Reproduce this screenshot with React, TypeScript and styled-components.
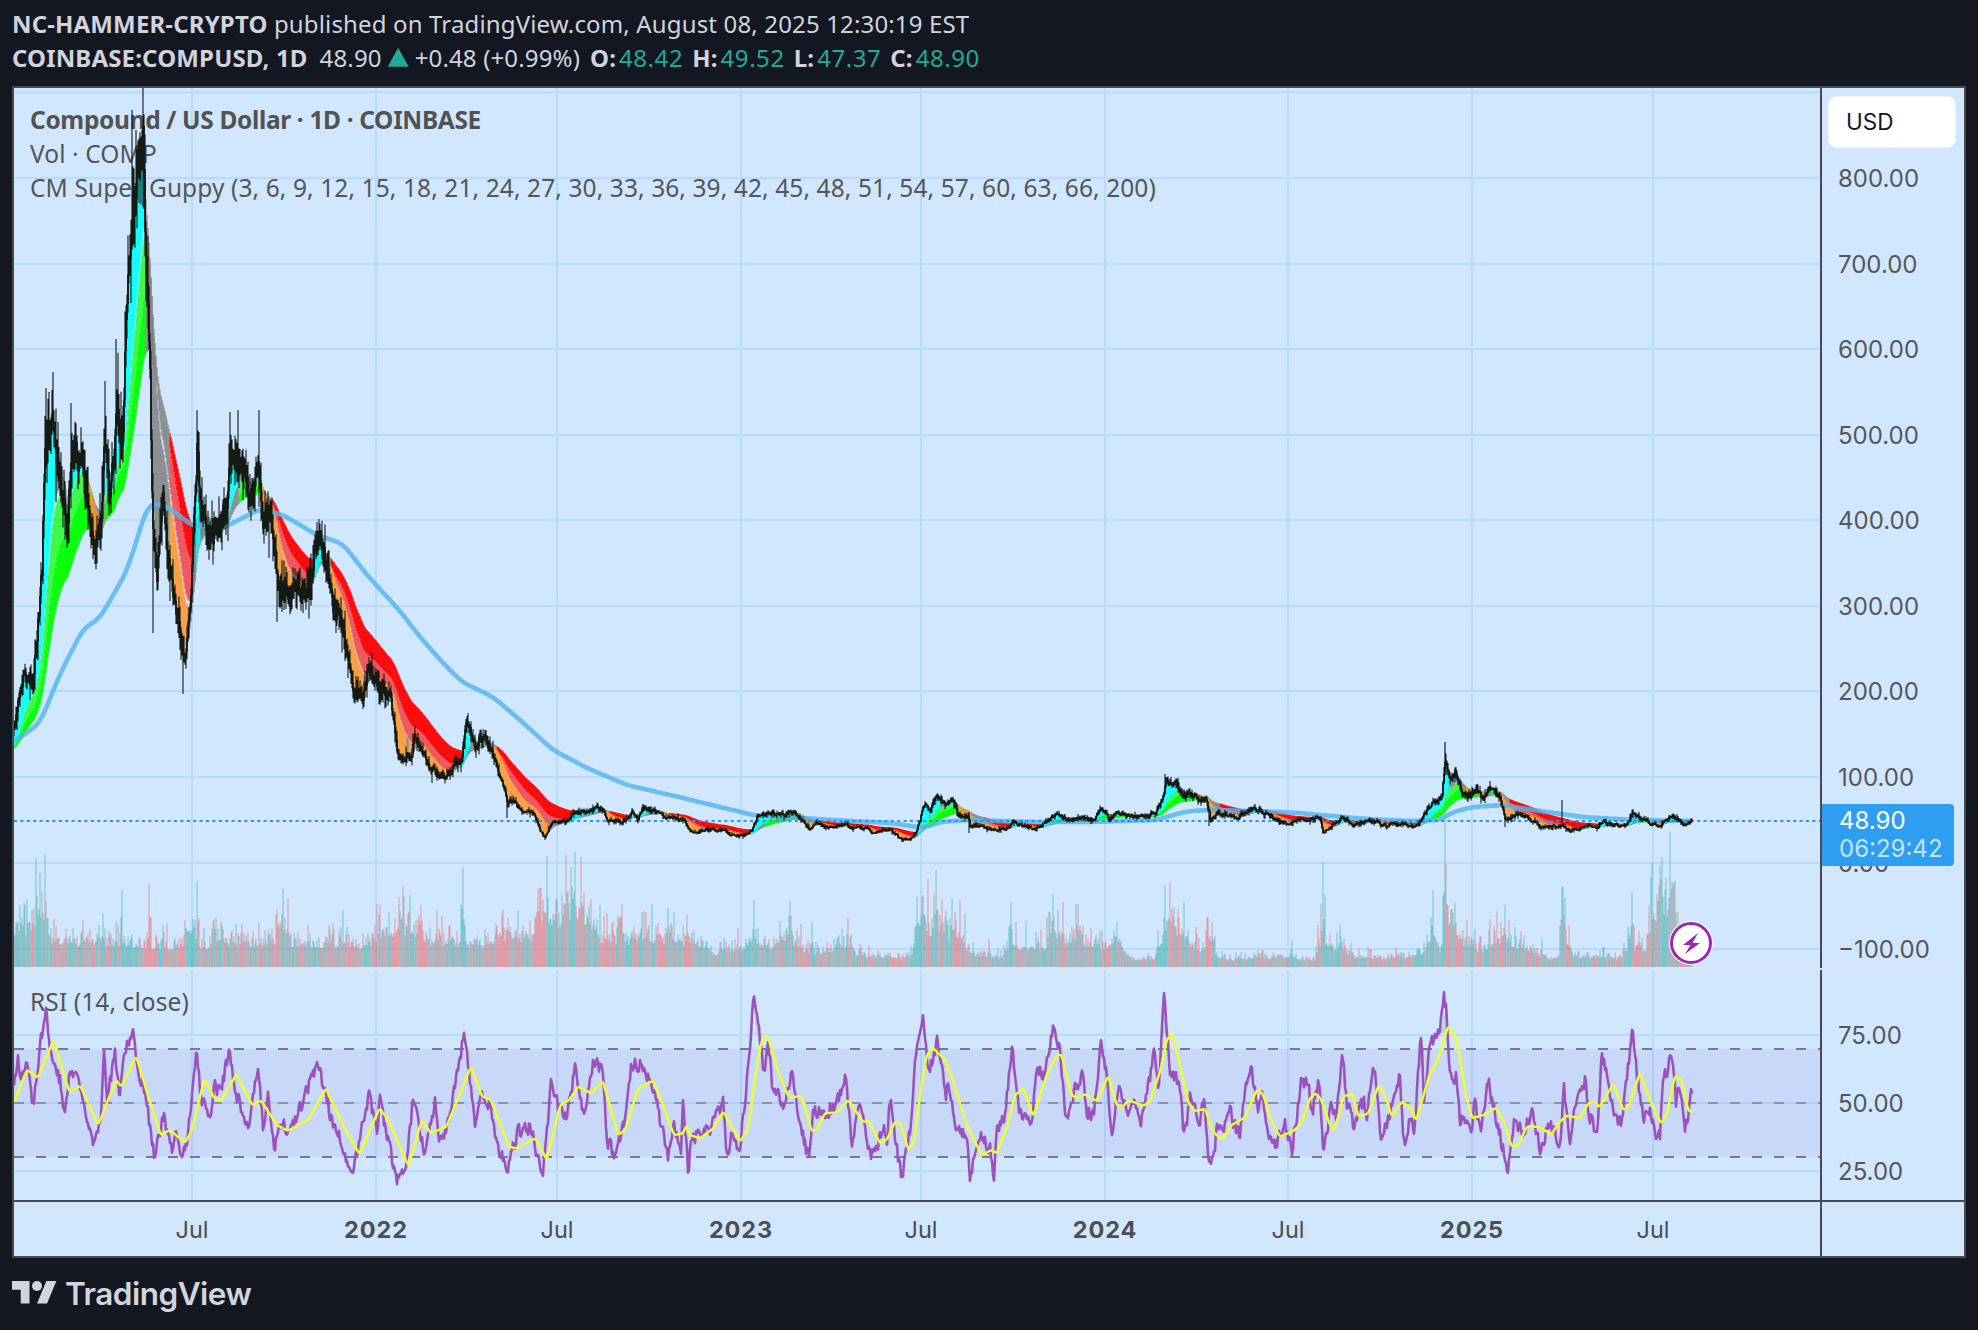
import React from 'react';
import styled, { createGlobalStyle } from 'styled-components';

type Pt = [number, number];
const conv = (bx: number, sx: number, by: number, sy: number, a: number[]): Pt[] => {
  const o: Pt[] = [];
  for (let i = 0; i < a.length; i += 2) o.push([bx + a[i] / sx, by + a[i + 1] / sy]);
  return o;
};
const interp = (pts: Pt[], x: number): number => {
  if (x <= pts[0][0]) return pts[0][1];
  for (let i = 1; i < pts.length; i++) {
    if (x <= pts[i][0]) {
      const [x0, y0] = pts[i - 1];
      const [x1, y1] = pts[i];
      return y0 + ((y1 - y0) * (x - x0)) / Math.max(x1 - x0, 0.001);
    }
  }
  return pts[pts.length - 1][1];
};
const prng = (seed: number) => () => {
  seed |= 0;
  seed = (seed + 0x6d2b79f5) | 0;
  let t = Math.imul(seed ^ (seed >>> 15), 1 | seed);
  t = (t + Math.imul(t ^ (t >>> 7), 61 | t)) ^ t;
  return ((t ^ (t >>> 14)) >>> 0) / 4294967296;
};
const X0 = 14;
const X1 = 1692;

const priceAnchors: Pt[] = [
  [15, 723], [23, 678], [33, 678], [37, 638], [42, 571], [45, 450], [53, 420], [57, 459], [67, 526], [72, 450], [80, 459], [88, 504], [95, 562], [100, 526], [105, 445], [110, 482], [117, 420], [122, 437], [128, 290], [133, 210], [137, 170], [143, 150], [145, 214], [150, 392], [153, 526], [157, 571], [163, 504], [170, 571], [177, 616], [185, 660], [190, 616], [197, 450], [200, 504], [210, 549], [217, 526], [227, 504], [230, 450], [240, 459], [250, 504], [257, 459], [263, 526], [270, 504], [277, 571], [283, 593], [293, 589], [307, 593], [317, 540], [327, 571], [333, 607], [343, 629], [353, 692], [363, 696], [368, 665], [377, 683], [390, 696], [397, 750],
  [400, 757], [410, 757], [415, 737], [423, 757], [432, 772], [442, 775], [450, 777], [455, 763], [462, 760], [465, 727], [468, 722], [475, 747], [480, 737], [487, 742], [495, 760], [500, 777], [507, 800], [515, 803], [523, 813], [533, 812], [540, 830], [545, 838], [552, 822], [567, 822], [575, 812], [587, 813], [600, 807], [608, 820], [623, 823], [632, 813], [638, 818], [643, 808], [658, 812], [667, 818], [685, 820], [690, 832], [710, 830], [725, 830], [730, 835], [743, 836], [752, 830], [757, 817], [768, 813], [780, 815], [792, 812], [803, 820], [810, 830], [817, 823], [827, 827], [847, 825], [850, 828], [867, 828], [873, 833], [885, 830],
  ...conv(890, 3, 740, 3, [0, 268, 35, 298, 60, 298, 80, 275, 95, 220, 105, 190, 120, 215, 140, 170, 165, 195, 185, 175, 205, 225, 235, 225, 240, 255, 270, 258, 310, 270, 360, 262, 370, 245, 400, 260, 430, 265, 470, 245, 490, 228, 510, 225, 530, 238, 575, 235, 610, 240, 635, 205, 660, 235, 685, 218, 720, 228, 760, 232, 800, 212, 815, 180, 828, 125, 860, 135, 880, 170, 905, 165, 930, 185, 950, 180, 960, 235, 985, 218, 1040, 230, 1090, 205, 1120, 220, 1150, 238, 1200, 250, 1240, 237]),
  [1300, 820], [1320, 818], [1323, 832], [1333, 825], [1342, 817], [1353, 826], [1373, 820], [1383, 825], [1403, 824], [1415, 827], [1422, 817], [1433, 803], [1442, 797], [1445, 762], [1450, 780], [1455, 770], [1462, 793], [1470, 797], [1477, 790], [1483, 800], [1488, 787], [1500, 797], [1505, 820], [1517, 813], [1533, 820], [1542, 828], [1560, 825], [1570, 830], [1593, 826], [1598, 828], [1602, 822], [1620, 826], [1628, 823], [1633, 812], [1643, 820], [1653, 825], [1660, 827], [1667, 818], [1673, 817], [1685, 824], [1692, 821],
];
const emaAnchors: Pt[] = [
  [15, 741], [40, 723], [60, 674], [83, 629], [100, 618], [127, 571], [148, 504], [165, 505], [193, 526], [227, 526], [260, 509], [283, 515], [317, 535], [343, 544], [367, 575], [400, 611], [420, 637], [443, 663], [462, 682], [493, 697], [520, 720], [553, 750], [587, 768], [627, 785], [683, 798], [753, 815], [833, 820], [890, 823], [917, 827], [927, 827], [940, 822], [967, 820], [1037, 822], [1090, 822], [1157, 820], [1173, 815], [1190, 811], [1210, 810], [1257, 811], [1300, 813], [1320, 815], [1367, 819], [1413, 821], [1440, 820], [1453, 812], [1473, 807], [1503, 805], [1533, 810], [1583, 817], [1633, 820], [1692, 821],
];
const wickHigh: Record<number, number> = { 143: 86, 132: 110, 136: 130, 53: 372, 46: 388, 116: 339, 105: 381, 71: 403, 197: 410, 238: 410, 230: 412, 259: 410, 317: 522, 468: 713, 1165: 774, 1445: 742, 1562: 800 };
const wickLow: Record<number, number> = { 153: 633, 183: 694, 277: 622, 432: 783, 507: 818, 545: 840, 902: 842, 969: 833, 1209: 826, 1505: 827, 1323: 833 };

const volEnv: Pt[] = [
  [14, 45], [40, 42], [50, 30], [90, 28], [150, 22], [180, 20], [190, 45], [195, 25], [260, 24], [300, 24], [370, 25], [380, 35], [405, 42], [445, 25], [480, 25], [500, 30], [530, 32], [547, 50], [552, 48], [566, 62], [581, 60], [590, 38], [600, 30], [640, 30], [700, 25], [710, 16], [750, 18], [780, 26], [795, 28], [805, 15], [815, 16], [850, 22], [856, 12], [900, 10], [915, 14], [922, 42], [945, 38], [960, 34], [970, 14], [1000, 10], [1015, 24], [1035, 16], [1055, 26], [1085, 26], [1100, 20], [1120, 25], [1130, 9], [1155, 11], [1165, 35], [1190, 30], [1200, 14], [1210, 28], [1218, 9], [1290, 10], [1316, 6], [1320, 22], [1345, 16], [1355, 11], [1410, 11], [1425, 18], [1435, 35], [1440, 14], [1447, 50], [1465, 26], [1480, 16], [1495, 26], [1520, 24], [1540, 13], [1560, 8], [1565, 30], [1572, 12], [1620, 9], [1630, 22], [1645, 18], [1652, 45], [1675, 55], [1683, 8], [1692, 3],
];
const volSpikes: Record<number, number> = { 45: 113, 40: 94, 20: 62, 122: 77, 149: 83, 197: 85, 193: 48, 283: 78, 288: 68, 380: 62, 463: 100, 537: 55, 547: 111, 566: 112, 571: 100, 575: 115, 581: 110, 620: 50, 646: 55, 687: 52, 754: 67, 790: 66, 812: 45, 848: 50, 917: 70, 922: 70, 934: 73, 936: 97, 952: 68, 1011: 65, 1036: 35, 1050: 55, 1053: 73, 1058: 57, 1076: 63, 1078: 63, 1102: 36, 1117: 45, 1165: 82, 1170: 85, 1178: 58, 1208: 50, 1212: 45, 1292: 27, 1318: 42, 1323: 105, 1340: 42, 1433: 77, 1445: 225, 1446: 103, 1452: 58, 1505: 62, 1542: 28, 1562: 80, 1563: 80, 1628: 40, 1632: 75, 1662: 110, 1666: 90, 1670: 135, 1672: 85, 1674: 85 };
const volRed = new Set([149, 35, 288, 380, 546, 566, 581, 620, 646, 922, 934, 1170, 1208, 1212, 1446, 1452, 1633]);
const volTeal = new Set([45, 122, 283, 463, 547, 571, 575, 754, 790, 812, 936, 1053, 1076, 1165, 1292, 1323, 1340, 1433, 1445, 1505, 1542, 1562, 1563, 1628, 1662, 1666, 1670, 1672, 1674]);

const rsiPurple: Pt[] = [
  ...conv(0, 2.24, 960, 3, [32, 380, 40, 300, 50, 360, 60, 295, 72, 440, 85, 350, 90, 260, 103, 150, 110, 250, 125, 340, 135, 360, 145, 470, 155, 340, 175, 345, 190, 450, 208, 565, 225, 490, 233, 265, 240, 420, 258, 285, 268, 420, 280, 270, 298, 205, 305, 320, 325, 400, 345, 585, 360, 500, 368, 475, 385, 560, 392, 510, 408, 585, 420, 545, 428, 430, 440, 265, 450, 410, 470, 480, 480, 380, 495, 400, 510, 290, 515, 265, 525, 380, 550, 480, 560, 490, 578, 315, 590, 510, 600, 410, 615, 580, 625, 480, 650, 510, 665, 470, 690, 380, 712, 305, 725, 380, 745, 490, 760, 530, 775, 590, 793, 628, 810, 490, 828, 395, 845, 540, 850, 415, 865, 520, 890, 655, 910, 620, 925, 415, 950, 580, 975, 420, 985, 540, 1005, 490, 1020, 380, 1040, 220, 1050, 320, 1065, 490, 1080, 390, 1100, 450, 1115, 560, 1138, 625, 1160, 515, 1190, 505, 1200, 580, 1215, 658, 1235, 365, 1250, 440, 1270, 460, 1290, 315, 1305, 470, 1330, 300, 1350, 340, 1360, 540, 1378, 585, 1400, 470, 1415, 315, 1437, 310, 1470, 410, 1480, 490, 1497, 590, 1510, 500, 1525, 580, 1530, 430, 1542, 635]),
  ...conv(690, 3, 985, 3, [0, 480, 30, 440, 60, 430, 100, 350, 108, 480, 115, 525, 125, 450, 150, 495, 165, 350, 190, 55, 200, 60, 210, 170, 222, 260, 235, 170, 245, 290, 265, 320, 278, 370, 305, 255, 320, 360, 355, 520, 370, 370, 395, 385, 440, 360, 468, 280, 485, 470, 510, 350, 535, 480, 550, 520, 580, 430, 590, 480, 600, 340, 620, 490, 635, 585, 660, 430, 680, 190, 700, 95, 715, 270, 742, 170, 760, 260, 768, 355, 775, 280, 800, 430, 830, 440, 840, 565, 875, 450, 900, 495, 912, 570, 920, 430, 945, 400, 965, 180, 985, 370, 1025, 425, 1040, 240, 1060, 280, 1090, 135, 1110, 200, 1128, 405, 1150, 325, 1180, 265, 1190, 380, 1210, 390, 1235, 165, 1250, 270, 1265, 455, 1285, 295, 1315, 400, 1330, 335, 1355, 405, 1395, 195, 1405, 330, 1422, 35, 1440, 260, 1470, 300, 1482, 450, 1497, 370]),
  ...conv(1190, 3, 985, 3, [0, 345, 15, 335, 25, 420, 42, 350, 58, 540, 72, 500, 85, 405, 100, 440, 118, 365, 130, 420, 150, 440, 170, 280, 185, 260, 205, 380, 215, 310, 235, 460, 255, 490, 285, 410, 305, 500, 335, 285, 355, 300, 365, 390, 388, 285, 400, 520, 410, 435, 425, 365, 440, 400, 457, 205, 470, 350, 490, 420, 520, 345, 530, 400, 550, 228, 572, 445, 590, 415, 630, 275, 642, 475, 665, 380, 672, 455, 693, 148, 703, 355, 715, 210, 725, 165, 750, 130, 762, 25, 770, 80, 780, 275, 800, 280, 810, 405, 845, 435, 855, 345, 870, 440, 895, 290, 915, 380, 945, 520, 953, 548, 975, 400, 1000, 450, 1025, 380, 1050, 490, 1080, 410, 1110, 475, 1122, 310, 1140, 465, 1155, 370, 1185, 285, 1200, 400, 1222, 440, 1235, 200, 1250, 270, 1270, 375, 1295, 425, 1328, 120, 1340, 260, 1362, 400, 1385, 385, 1395, 450, 1410, 445, 1418, 295, 1448, 205, 1458, 365, 1468, 300, 1485, 445, 1505, 320]),
];
const rsiYellow: Pt[] = [
  ...conv(0, 2.24, 960, 3, [32, 425, 60, 330, 85, 352, 120, 240, 155, 395, 180, 378, 220, 495, 260, 360, 272, 380, 305, 288, 330, 400, 360, 525, 380, 510, 415, 548, 430, 510, 458, 355, 480, 415, 495, 422, 530, 342, 565, 435, 585, 422, 620, 495, 645, 512, 690, 480, 730, 385, 770, 500, 805, 582, 850, 445, 870, 480, 915, 618, 945, 480, 965, 520, 1000, 500, 1055, 320, 1080, 410, 1100, 420, 1140, 560, 1155, 565, 1200, 535, 1225, 600, 1255, 435, 1275, 420, 1295, 380, 1325, 400, 1350, 362, 1385, 525, 1400, 510, 1430, 385, 1463, 362, 1480, 420, 1510, 525, 1530, 520, 1538, 495]),
  ...conv(690, 3, 985, 3, [0, 450, 30, 460, 70, 430, 100, 380, 150, 470, 175, 430, 195, 280, 215, 165, 232, 150, 265, 260, 295, 335, 335, 335, 365, 438, 380, 435, 405, 385, 440, 382, 475, 345, 520, 412, 535, 405, 570, 475, 590, 465, 615, 410, 632, 415, 655, 495, 672, 470, 690, 330, 710, 210, 730, 190, 765, 225, 790, 290, 830, 420, 875, 510, 905, 495, 920, 505, 950, 430, 975, 330, 1000, 310, 1030, 395, 1070, 270, 1100, 210, 1115, 210, 1145, 330, 1160, 340, 1185, 328, 1220, 348, 1255, 272, 1280, 360, 1295, 370, 1315, 345, 1360, 362, 1380, 350, 1410, 260, 1430, 165, 1447, 145, 1470, 240, 1497, 360]),
  ...conv(1190, 3, 985, 3, [0, 360, 15, 378, 45, 372, 70, 440, 95, 465, 125, 420, 165, 397, 200, 315, 218, 325, 245, 410, 270, 455, 310, 438, 335, 415, 360, 340, 375, 325, 392, 340, 420, 420, 433, 438, 460, 335, 487, 325, 505, 395, 535, 385, 567, 298, 590, 345, 605, 395, 635, 350, 665, 370, 678, 408, 720, 265, 740, 235, 775, 122, 800, 165, 830, 340, 847, 400, 880, 390, 920, 368, 945, 420, 965, 485, 985, 480, 1010, 425, 1045, 425, 1085, 448, 1105, 415, 1130, 392, 1170, 400, 1195, 355, 1215, 350, 1228, 367, 1270, 297, 1300, 375, 1315, 368, 1350, 263, 1380, 345, 1413, 415, 1430, 390, 1455, 272, 1475, 285, 1495, 378, 1505, 380]),
];

const f1 = (n: number) => n.toFixed(1);
const buildChart = () => {
  const r = prng(20250808);
  const fastP = [3, 6, 9, 12, 15, 18, 21];
  const slowP = [24, 27, 30, 33, 36, 39, 42, 45, 48, 51, 54, 57, 60, 63, 66];
  const all = [...fastP, ...slowP];
  const emas = all.map(() => 748);
  let prev = interp(priceAnchors, X0);
  let ar = 0;
  let wicks = '';
  let bodies = '';
  const ribbons: Record<string, string> = { aqua: '', orange: '', grayF: '', lime: '', limePale: '', red: '', redPale: '', grayS: '' };
  let volT = '';
  let volR = '';
  let vn = 0;
  for (let x = X0; x <= X1; x++) {
    const base = interp(priceAnchors, x);
    const h = Math.max(863 - base, 26);
    ar = 0.4 * ar + (r() - 0.5);
    const close = base + h * 0.075 * ar;
    const top = Math.min(prev, close);
    const bot = Math.max(prev, close);
    let hi = top - h * (0.015 + 0.09 * r() * r());
    let lo = bot + h * (0.015 + 0.09 * r() * r());
    if (wickHigh[x]) hi = wickHigh[x];
    if (wickLow[x]) lo = wickLow[x];
    wicks += `M${x} ${f1(hi)}V${f1(lo)}`;
    bodies += `M${x} ${f1(top)}V${f1(Math.max(bot, top + 1))}`;
    all.forEach((p, i) => {
      const a = 2 / (p + 1);
      emas[i] = emas[i] * (1 - a) + close * a;
    });
    const fe = emas.slice(0, fastP.length);
    const se = emas.slice(fastP.length);
    const ordered = (e: number[], dir: number) => e.every((v, i) => i === 0 || (v - e[i - 1]) * dir >= 0);
    const seg = (e: number[]) => `M${x} ${f1(Math.min(...e) - 1)}V${f1(Math.max(...e) + 1)}`;
    const afterPeak = x >= 146 && x < 170;
    const fk = afterPeak ? 'grayF' : ordered(fe, 1) ? 'aqua' : ordered(fe, -1) ? 'orange' : 'grayF';
    const sk = afterPeak ? 'grayS' : ordered(se, 1) ? 'lime' : ordered(se, -1) ? 'red' : 'grayS';
    ribbons[fk] += seg(fe);
    if (sk === 'grayS') {
      ribbons.grayS += seg(se);
    } else {
      ribbons[`${sk}Pale`] += seg(se.slice(0, 7));
      ribbons[sk] += seg(se.slice(6));
    }
    vn = 0.55 * vn + r();
    let vh = interp(volEnv, x) * 1.2 * (0.5 + 0.72 * vn * (0.25 + 1.2 * r() * r()));
    for (let d = -2; d <= 2; d++) {
      const s = volSpikes[x + d];
      if (s && d !== 0) vh = Math.max(vh, Math.min(s, 110) * (0.3 + 0.4 * r()));
    }
    if (volSpikes[x]) vh = volSpikes[x];
    const teal = volTeal.has(x) ? true : volRed.has(x) ? false : close < prev;
    const bar = `M${x} 967V${f1(967 - Math.max(vh, 1.5))}`;
    if (teal) volT += bar;
    else volR += bar;
    prev = close;
  }
  let ema = '';
  for (let x = 15; x <= X1; x += 2) {
    let s = 0;
    let n = 0;
    for (let k = -6; k <= 6; k += 2) {
      s += interp(emaAnchors, x + k);
      n++;
    }
    ema += `${ema ? 'L' : 'M'}${x} ${f1(s / n)}`;
  }
  return { wicks, bodies, ribbons, ema, volT, volR };
};
const buildRsi = () => {
  const r = prng(77);
  let ar = 0;
  let purple = '';
  let yellow = '';
  for (let x = X0; x <= X1; x++) {
    ar = 0.2 * ar + (r() - 0.5);
    const p = interp(rsiPurple, x) + ar * 14;
    purple += `${purple ? 'L' : 'M'}${x} ${f1(p)}`;
    const yy = (interp(rsiYellow, x - 1) + interp(rsiYellow, x) + interp(rsiYellow, x + 1)) / 3;
    yellow += `${yellow ? 'L' : 'M'}${x} ${f1(yy)}`;
  }
  return { purple, yellow };
};
const chart = buildChart();
const rsi = buildRsi();

const BG = '#d1e7ff';
const GRID = '#b8daff';
const LINE = '#484a4e';

const GlobalStyle = createGlobalStyle`
  html, body { margin: 0; padding: 0; background: #131722; }
  #root { width: 1978px; height: 1330px; overflow: hidden; }
  * { box-sizing: border-box; }
`;
const Page = styled.div`
  width: 1978px;
  height: 1330px;
  background: #131722;
  font-family: "Noto Sans", "Open Sans", sans-serif;
  display: flex;
  flex-direction: column;
`;
const Header = styled.header`
  height: 86px;
  padding: 7px 0 0 12px;
  color: #d1d4dc;
  font-size: 24px;
  letter-spacing: 0.15px;
`;
const HeaderLine = styled.div`
  height: 33.5px;
  line-height: 33px;
  white-space: nowrap;
  display: flex;
  align-items: center;
`;
const Strong = styled.b<{ $gap?: number }>`
  font-weight: 700;
  margin-left: ${(p) => p.$gap ?? 0}px;
  white-space: pre;
`;
const Plain = styled.span<{ $gap?: number }>`
  margin-left: ${(p) => p.$gap ?? 0}px;
  white-space: pre;
`;
const Teal = styled.span`
  color: #22ab94;
  margin-left: 3px;
  letter-spacing: 0.55px;
`;
const UpTriangle = styled.i`
  display: inline-block;
  width: 21px;
  height: 19px;
  margin: 0 6px;
  background: #22ab94;
  clip-path: polygon(50% 0, 100% 100%, 0 100%);
`;
const Frame = styled.main`
  width: 1954px;
  height: 1172px;
  margin-left: 12px;
  border: 2px solid ${LINE};
  background: ${BG};
  display: flex;
  flex-direction: column;
`;
const Row = styled.section<{ $h: number; $line?: string }>`
  height: ${(p) => p.$h}px;
  display: flex;
  flex: none;
  border-top: ${(p) => (p.$line ? `2px solid ${p.$line}` : 'none')};
`;
const Pane = styled.div`
  position: relative;
  width: 1806px;
  flex: none;
  overflow: hidden;
`;
const Layer = styled.svg`
  position: absolute;
  left: 0;
  top: 0;
  width: 100%;
  height: 100%;
  display: block;
`;
const AxisCol = styled.div`
  position: relative;
  flex: 1;
  border-left: 2px solid ${LINE};
`;
const AxisLabel = styled.span`
  position: absolute;
  left: 16px;
  margin-top: 1px;
  transform: translateY(-50%);
  font-family: Inter, "Liberation Sans", sans-serif;
  font-size: 24px;
  line-height: 28px;
  color: #555659;
  white-space: nowrap;
`;
const CurrencyButton = styled.div`
  position: absolute;
  left: 6px;
  top: 8px;
  width: 128px;
  height: 52px;
  border-radius: 8px;
  background: #fff;
  border: 1px solid #eef0f3;
  padding-left: 17px;
  line-height: 50px;
  font-family: Inter, "Liberation Sans", sans-serif;
  font-size: 22.5px;
  color: #131722;
`;
const PriceTag = styled.div`
  position: absolute;
  left: 0;
  top: 716px;
  width: 132px;
  height: 62px;
  padding: 3px 0 0 17px;
  background: #2e9ff0;
  border-radius: 0 4px 4px 0;
  font-family: Inter, "Liberation Sans", sans-serif;
  font-size: 24px;
  line-height: 28px;
  color: #fff;
`;
const Countdown = styled.div`
  color: rgba(255, 255, 255, 0.72);
`;
const Legend = styled.div`
  position: absolute;
  left: 16px;
  top: 15px;
  color: #555;
  font-size: 24.5px;
  line-height: 34.2px;
  letter-spacing: 0.1px;
  white-space: nowrap;
`;
const LegendTitle = styled.div`
  font-weight: 700;
  color: #525252;
  letter-spacing: -0.35px;
`;
const RsiLegend = styled.div`
  position: absolute;
  left: 16px;
  top: 15px;
  color: #555;
  font-size: 24.5px;
  line-height: 34px;
  letter-spacing: 0.1px;
`;
const Badge = styled.svg`
  position: absolute;
  left: 1655px;
  top: 833px;
  width: 44px;
  height: 44px;
`;
const TimeLabel = styled.span<{ $bold?: boolean }>`
  position: absolute;
  top: 50%;
  transform: translate(-50%, -50%);
  font-family: Inter, "Liberation Sans", sans-serif;
  font-size: 23.5px;
  font-weight: ${(p) => (p.$bold ? 700 : 400)};
  letter-spacing: ${(p) => (p.$bold ? '0.9px' : '0')};
  color: #4e4e50;
`;
const TimeAxis = styled.div`
  position: relative;
  width: 1806px;
  flex: none;
`;
const Footer = styled.footer`
  height: 72px;
  padding: 0 0 2px 12px;
  display: flex;
  align-items: center;
  color: #d3d5de;
`;
const LogoMark = styled.svg`
  width: 45px;
  height: 35px;
  flex: none;
`;
const LogoText = styled.span`
  margin-left: 8px;
  font-family: Inter, "Liberation Sans", sans-serif;
  font-weight: 600;
  font-size: 31.5px;
  letter-spacing: -0.5px;
`;

const vLines = [192, 376, 557, 741, 921, 1105, 1288, 1472, 1653];
const hLines = [92.5, 178, 264, 349, 435, 520, 606, 691, 777, 863, 949];
const priceLabels: [string, number][] = [
  ['800.00', 178], ['700.00', 264], ['600.00', 349], ['500.00', 435], ['400.00', 520], ['300.00', 606], ['200.00', 691], ['100.00', 777], ['0.00', 863], ['−100.00', 949],
];
const rsiLabels: [string, number][] = [['75.00', 1035], ['50.00', 1103], ['25.00', 1171]];
const timeLabels: [string, number, boolean][] = [
  ['Jul', 192, false], ['2022', 376, true], ['Jul', 557, false], ['2023', 741, true], ['Jul', 921, false], ['2024', 1105, true], ['Jul', 1288, false], ['2025', 1472, true], ['Jul', 1653, false],
];

const GridLines: React.FC<{ y0: number; y1: number; hs: number[] }> = ({ y0, y1, hs }) => (
  <g stroke={GRID} strokeWidth={2}>
    {vLines.map((x) => (
      <line key={x} x1={x} x2={x} y1={y0} y2={y1} />
    ))}
    {hs.map((y) => (
      <line key={y} x1={14} x2={1820} y1={y} y2={y} />
    ))}
  </g>
);

const RibbonPath: React.FC<{ d: string; color: string; o?: number }> = ({ d, color, o = 0.95 }) => (
  <path d={d} fill="none" stroke={color} strokeWidth={1.3} opacity={o} />
);

export default function App() {
  return (
    <Page>
      <GlobalStyle />
      <Header>
        <HeaderLine>
          <Strong>NC-HAMMER-CRYPTO</Strong>
          <Plain> published on TradingView.com, August 08, 2025 12:30:19 EST</Plain>
        </HeaderLine>
        <HeaderLine>
          <Strong>COINBASE:COMPUSD, 1D</Strong>
          <Plain $gap={12}>48.90</Plain>
          <UpTriangle />
          <Plain>+0.48 (+0.99%)</Plain>
          <Strong $gap={10}>O:</Strong>
          <Teal>48.42</Teal>
          <Strong $gap={9}>H:</Strong>
          <Teal>49.52</Teal>
          <Strong $gap={9}>L:</Strong>
          <Teal>47.37</Teal>
          <Strong $gap={9}>C:</Strong>
          <Teal>48.90</Teal>
        </HeaderLine>
      </Header>
      <Frame>
        <Row $h={880}>
          <Pane>
            <Layer viewBox="14 88 1806 880">
              <GridLines y0={88} y1={968} hs={hLines} />
            </Layer>
            <Legend>
              <LegendTitle>Compound / US Dollar · 1D · COINBASE</LegendTitle>
              <div>Vol · COMP</div>
              <div>CM Super Guppy (3, 6, 9, 12, 15, 18, 21, 24, 27, 30, 33, 36, 39, 42, 45, 48, 51, 54, 57, 60, 63, 66, 200)</div>
            </Legend>
            <Layer viewBox="14 88 1806 880">
              <path d={chart.volR} fill="none" stroke="rgba(239,83,80,0.5)" strokeWidth={1.05} />
              <path d={chart.volT} fill="none" stroke="rgba(38,166,154,0.5)" strokeWidth={1.05} />
              <RibbonPath d={chart.ribbons.limePale} color="#00ff00" o={0.7} />
              <RibbonPath d={chart.ribbons.lime} color="#00ff00" />
              <RibbonPath d={chart.ribbons.redPale} color="#ff0000" o={0.62} />
              <RibbonPath d={chart.ribbons.red} color="#ff0000" />
              <RibbonPath d={chart.ribbons.grayS} color="#808080" o={0.85} />
              <RibbonPath d={chart.ribbons.aqua} color="#00ffff" o={0.9} />
              <RibbonPath d={chart.ribbons.orange} color="#ff9426" o={0.85} />
              <RibbonPath d={chart.ribbons.grayF} color="#808080" o={0.85} />
              <path d={chart.ema} fill="none" stroke="#52b6ea" strokeOpacity={0.82} strokeWidth={4.6} strokeLinejoin="round" />
              <line x1={14} x2={1820} y1={821} y2={821} stroke="#2196f3" strokeWidth={2} strokeDasharray="3 3.4" />
              <path d={chart.wicks} fill="none" stroke="#141a14" strokeWidth={1.1} />
              <path d={chart.bodies} fill="none" stroke="#141a14" strokeWidth={1.8} />
            </Layer>
            <Badge viewBox="0 0 44 44">
              <circle cx={22} cy={22} r={22} fill="#fff" />
              <circle cx={22} cy={22} r={19.5} fill="#fff" stroke="#9c27b0" strokeWidth={3} />
              <path d="M29 12 L14 24 L21.5 24 L16 33 L31 22 L23.5 22 Z" fill="#9c27b0" />
            </Badge>
          </Pane>
          <AxisCol>
            <CurrencyButton>USD</CurrencyButton>
            {priceLabels.map(([t, y]) => (
              <AxisLabel key={t} style={{ top: y - 88 }}>{t}</AxisLabel>
            ))}
            <PriceTag>
              48.90
              <Countdown>06:29:42</Countdown>
            </PriceTag>
          </AxisCol>
        </Row>
        <Row $h={232} $line="#e0e3eb">
          <Pane>
            <Layer viewBox="14 970 1806 230">
              <GridLines y0={970} y1={1200} hs={[1035, 1103, 1171]} />
              <rect x={14} y={1049} width={1806} height={108} fill="rgba(126,87,194,0.1)" />
            </Layer>
            <RsiLegend>RSI (14, close)</RsiLegend>
            <Layer viewBox="14 970 1806 230">
              <g stroke="#787b86" strokeWidth={2} strokeDasharray="10 12">
                <line x1={14} x2={1820} y1={1049} y2={1049} />
                <line x1={14} x2={1820} y1={1103} y2={1103} strokeOpacity={0.7} />
                <line x1={14} x2={1820} y1={1157} y2={1157} />
              </g>
              <path d="M755 1014h3l2 21h-4zM1163 1015h3l2 20h-5zM1443 1015h3l1 18h-5z" fill="#aedccf" />
              <path d={rsi.purple} fill="none" stroke="#9b52bc" strokeWidth={2.6} strokeLinejoin="round" />
              <path d={rsi.yellow} fill="none" stroke="#f0ff2a" strokeWidth={2.4} strokeLinejoin="round" />
            </Layer>
          </Pane>
          <AxisCol>
            {rsiLabels.map(([t, y]) => (
              <AxisLabel key={t} style={{ top: y - 970 }}>{t}</AxisLabel>
            ))}
          </AxisCol>
        </Row>
        <Row $h={56} $line={LINE}>
          <TimeAxis>
            {timeLabels.map(([t, x, b]) => (
              <TimeLabel key={x} $bold={b} style={{ left: x - 14 }}>{t}</TimeLabel>
            ))}
          </TimeAxis>
          <AxisCol />
        </Row>
      </Frame>
      <Footer>
        <LogoMark viewBox="0 0 36 28">
          <path fill="currentColor" d="M14 22H7V11H0V4h14v18zM28 22h-8l7.5-18h8L28 22z" />
          <circle fill="currentColor" cx="20" cy="8" r="4" />
        </LogoMark>
        <LogoText>TradingView</LogoText>
      </Footer>
    </Page>
  );
}
